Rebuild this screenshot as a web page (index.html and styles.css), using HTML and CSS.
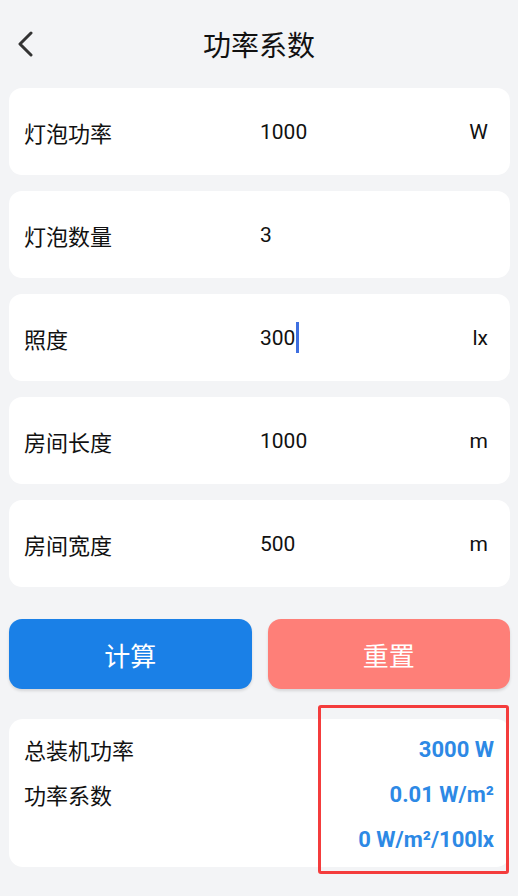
FILE: index.html
```html
<!DOCTYPE html>
<html lang="zh-CN">
<head>
    <meta charset="UTF-8">
    <meta name="viewport" content="width=device-width, initial-scale=1.0">
    <title>功率系数</title>
    <link rel="stylesheet" href="styles.css">
</head>
<body>

<header class="topbar">
    <a class="back" href="#">
        <svg width="18" height="26" viewBox="0 0 18 26">
            <path d="M15 2 L4 13 L15 24" fill="none" stroke="#333" stroke-width="3" stroke-linecap="round" stroke-linejoin="round"/>
        </svg>
    </a>
    <h1>功率系数</h1>
</header>

<main class="page">
    <div class="field">
        <span class="label">灯泡功率</span>
        <span class="value">1000</span>
        <span class="unit">W</span>
    </div>
    <div class="field">
        <span class="label">灯泡数量</span>
        <span class="value">3</span>
        <span class="unit"></span>
    </div>
    <div class="field">
        <span class="label">照度</span>
        <span class="value">300<span class="caret"></span></span>
        <span class="unit">lx</span>
    </div>
    <div class="field">
        <span class="label">房间长度</span>
        <span class="value">1000</span>
        <span class="unit">m</span>
    </div>
    <div class="field">
        <span class="label">房间宽度</span>
        <span class="value">500</span>
        <span class="unit">m</span>
    </div>

    <div class="actions">
        <button class="btn btn-calc">计算</button>
        <button class="btn btn-reset">重置</button>
    </div>

    <section class="result">
        <div class="result-labels">
            <div>总装机功率</div>
            <div>功率系数</div>
        </div>
        <div class="result-values">
            <div>3000 W</div>
            <div>0.01 W/m²</div>
            <div>0 W/m²/100lx</div>
        </div>
    </section>
</main>

<div class="highlight"></div>

</body>
</html>
```

FILE: styles.css
```css
body {
    margin: 0;
    padding: 0;
    background-color: #f3f4f6;
    font-family: Roboto, "Noto Sans CJK SC", sans-serif;
    color: #111;
    width: 518px;
    height: 896px;
    overflow: hidden;
}
.topbar {
    position: relative;
    height: 88px;
    display: flex;
    align-items: center;
    justify-content: center;
}
.topbar h1 {
    margin: 0;
    font-size: 28px;
    font-weight: 400;
    font-family: "Noto Sans CJK SC", sans-serif;
    color: #111;
}
.back {
    position: absolute;
    left: 16px;
    top: 31px;
    display: flex;
}
.page {
    padding: 0 8px 0 9px;
}
.field {
    display: grid;
    grid-template-columns: 236px 1fr auto;
    align-items: center;
    height: 87px;
    padding: 0 22px 0 15px;
    margin-bottom: 16px;
    background-color: white;
    border-radius: 13px;
}
.label {
    font-family: "Noto Sans CJK SC", sans-serif;
    font-size: 22px;
}
.value {
    font-size: 21px;
    display: flex;
    align-items: center;
}
.unit {
    font-size: 21px;
}
.caret {
    display: inline-block;
    width: 3px;
    height: 31px;
    margin-left: 1px;
    background-color: #3e6fe0;
}
.actions {
    display: flex;
    gap: 16px;
    margin-top: 32px;
}
.btn {
    flex: 1;
    height: 70px;
    border: none;
    border-radius: 13px;
    color: white;
    font-size: 26px;
    font-family: "Noto Sans CJK SC", sans-serif;
    box-shadow: 0 2px 3px rgba(0,0,0,0.12);
}
.btn-calc {
    background-color: #1a80e7;
}
.btn-reset {
    background-color: #fe7f78;
}
.result {
    display: flex;
    justify-content: space-between;
    margin-top: 30px;
    height: 148px;
    box-sizing: border-box;
    padding: 8px 16px 0 15px;
    background-color: white;
    border-radius: 14px;
}
.result-labels div {
    font-family: "Noto Sans CJK SC", sans-serif;
    font-size: 22px;
    line-height: 45px;
}
.result-values {
    text-align: right;
}
.result-values div {
    font-size: 22px;
    font-weight: bold;
    line-height: 45px;
    color: #2d89e5;
}
.highlight {
    position: absolute;
    left: 318px;
    top: 705px;
    width: 185px;
    height: 163px;
    border: 3px solid #f43c3c;
    border-radius: 3px;
}
```
